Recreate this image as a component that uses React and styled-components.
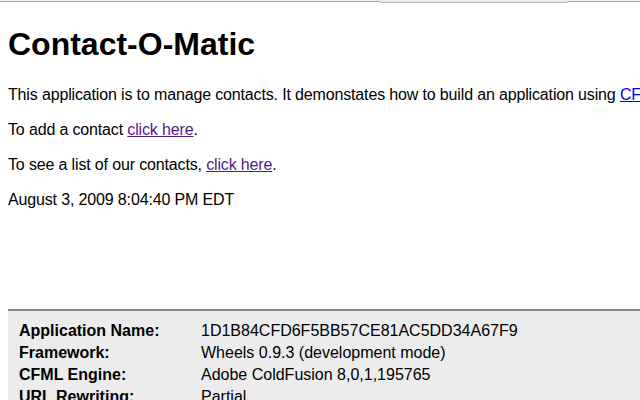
import React from "react";
import styled, { createGlobalStyle } from "styled-components";

const GlobalStyle = createGlobalStyle`
  html, body {
    margin: 0;
    padding: 0;
    background: #ffffff;
    overflow: hidden;
  }
  body {
    font-family: "Liberation Sans", Arial, sans-serif;
    font-size: 16px;
    color: #000000;
  }
`;

const ScrollStrip = styled.div`
  display: flex;
  height: 4px;
  width: 640px;
`;

const Track = styled.div`
  flex: ${(p) => p.$grow};
  height: 1px;
  border-bottom: 1px solid #a4a4a4;
  background: #f2f2f2;
`;

const Thumb = styled.div`
  flex: 0 0 188px;
  height: 3px;
  background: #eeeeee;
  border-bottom: 1px solid #b4b4b4;
  border-left: 1px solid #d8d8d8;
  border-right: 1px solid #d8d8d8;
  box-sizing: border-box;
`;

const Page = styled.div`
  width: 1000px;
  padding: 0 8px;
  white-space: nowrap;
`;

const Title = styled.h1`
  font-size: 32px;
  font-weight: bold;
  margin: 22px 0 22px;
`;

const Para = styled.p`
  margin: 16px 0;
  line-height: 19px;
  letter-spacing: -0.15px;
`;

const Link = styled.a`
  color: ${(p) => (p.$visited ? "#551a8b" : "#0000ee")};
  text-decoration: underline;
  cursor: pointer;
`;

const DebugPanel = styled.div`
  margin-top: 100px;
  background: #ececec;
  border-top: 2px solid #878787;
  padding: 9px 11px 10px;
`;

const DebugGrid = styled.div`
  display: grid;
  grid-template-columns: 182px auto;
  line-height: 22px;
`;

const Label = styled.div`
  font-weight: bold;
`;

const Value = styled.div`
  font-weight: normal;
`;

const rows = [
  ["Application Name:", "1D1B84CFD6F5BB57CE81AC5DD34A67F9"],
  ["Framework:", "Wheels 0.9.3 (development mode)"],
  ["CFML Engine:", "Adobe ColdFusion 8,0,1,195765"],
  ["URL Rewriting:", "Partial"],
  ["URL Obfuscation:", "Off"],
];

export default function App() {
  return (
    <>
      <GlobalStyle />
      <ScrollStrip>
        <Track $grow="0 0 380px" />
        <Thumb />
        <Track $grow="1 1 auto" />
      </ScrollStrip>
      <Page>
        <Title>Contact-O-Matic</Title>
        <Para>
          This application is to manage contacts. It demonstates how to build an application using{" "}
          <Link href="#">CFWheels</Link>.
        </Para>
        <Para>
          To add a contact <Link $visited href="#">click here</Link>.
        </Para>
        <Para>
          To see a list of our contacts, <Link $visited href="#">click here</Link>.
        </Para>
        <Para>August 3, 2009 8:04:40 PM EDT</Para>
        <DebugPanel>
          <DebugGrid>
            {rows.map(([label, value]) => (
              <React.Fragment key={label}>
                <Label>{label}</Label>
                <Value>{value}</Value>
              </React.Fragment>
            ))}
          </DebugGrid>
        </DebugPanel>
      </Page>
    </>
  );
}
